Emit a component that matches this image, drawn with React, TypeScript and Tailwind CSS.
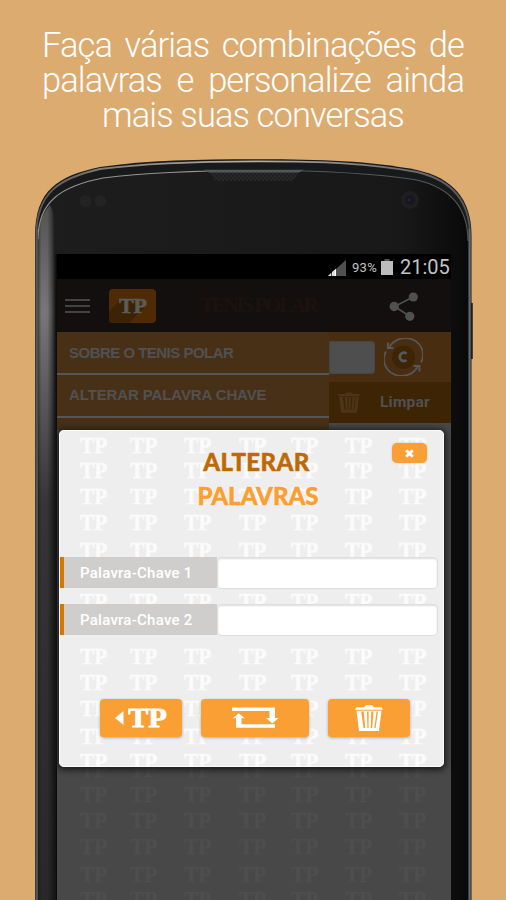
import React from "react";

const COLUMNS = [80, 130, 184, 239, 291, 345, 399];
const MODAL_ROWS = [438, 463, 489, 515, 543, 594, 649, 675, 701, 729, 754];
const SCREEN_ROWS = [762, 787, 813, 839, 867, 892];

const OUTLINE =
  "M35 760V77C35 31 58 17 100 8C150 1 200 .3 260 .3C320 .3 370 2 417 11C452 19 471.5 39 471.5 77V760Z";

// Repeating monogram wallpaper, positioned in page units.
function Wallpaper({ rows, x, y, width, height, color }: {
  rows: number[]; x: number; y: number; width: number; height: number; color: string;
}) {
  return (
    <svg className="absolute inset-0 h-full w-full" viewBox={`${x} ${y} ${width} ${height}`} aria-hidden="true">
      {rows.map((r) =>
        COLUMNS.map((c) => (
          <text key={`${r}-${c}`} x={c} y={r + 15} fill={color} stroke={color} strokeWidth=".5" fontFamily="Liberation Serif, serif" fontWeight="700" fontSize="23" textLength="27.5" lengthAdjust="spacingAndGlyphs">
            TP
          </text>
        )),
      )}
    </svg>
  );
}

function Monogram({ width, height, color }: { width: number; height: number; color: string }) {
  return (
    <svg width={width} height={height} viewBox="0 0 40 20">
      <text x="0" y="19.4" fill={color} stroke={color} strokeWidth=".8" fontFamily="Liberation Serif, serif" fontWeight="700" fontSize="28.5" textLength="40" lengthAdjust="spacingAndGlyphs">
        TP
      </text>
    </svg>
  );
}

function Trash({ className }: { className: string }) {
  return (
    <svg className={className} viewBox="0 0 28 26" fill="currentColor">
      <path d="M9.5 2.2Q9.7 .3 11.2 .3H16.8Q18.3 .3 18.5 2.2H26.5L28 4.8H0L1.5 2.2Z" />
      <path fillRule="evenodd" d="M1.5 5.8H26.5L24 26H4ZM6.2 6.5L8.5 23H10.2L8.8 6.5ZM12 6.5L12.4 23H13.6V6.5ZM16.3 6.5L15.8 23H17.2L18.5 6.5ZM21.6 6.5L19.3 23H20.6L23 6.5Z" />
    </svg>
  );
}

function PhoneBody() {
  return (
    <svg className="absolute inset-0" width="506" height="741" viewBox="0 0 506 741" aria-hidden="true">
      <defs>
        <linearGradient id="side" x1="0" x2="1">
          <stop offset="0" stopColor="#444" />
          <stop offset=".2" stopColor="#777" />
          <stop offset=".55" stopColor="#767676" />
          <stop offset=".8" stopColor="#4c4c4c" />
          <stop offset="1" stopColor="#1c1c1c" />
        </linearGradient>
        <linearGradient id="fade" x1="0" x2="0" y1="0" y2="1">
          <stop offset="0" stopColor="#111" stopOpacity=".35" />
          <stop offset=".15" stopColor="#111" stopOpacity="0" />
          <stop offset=".42" stopColor="#111" stopOpacity=".65" />
          <stop offset="1" stopColor="#111" stopOpacity=".78" />
        </linearGradient>
        <linearGradient id="glass" x1="0" x2="1">
          <stop offset="0" stopColor="#1d1d1d" />
          <stop offset=".85" stopColor="#181818" />
          <stop offset="1" stopColor="#090909" />
        </linearGradient>
        <linearGradient id="rim" x1="0" x2="1">
          <stop offset="0" stopColor="#555" />
          <stop offset=".2" stopColor="#8b8882" />
          <stop offset=".5" stopColor="#b9b0a4" />
          <stop offset=".8" stopColor="#777" />
          <stop offset="1" stopColor="#555" />
        </linearGradient>
        <pattern id="mesh" width="4" height="4" patternUnits="userSpaceOnUse">
          <rect width="4" height="4" fill="#292929" />
          <circle cx="1" cy="1" r=".8" fill="#111" />
          <circle cx="3" cy="3" r=".8" fill="#111" />
        </pattern>
      </defs>
      <path d="M471 144H472.8V200H471Z" fill="#222" />
      <path d={OUTLINE} fill="#17191a" />
      <path d="M36.3 760V77C36.3 33 60 19 100 10C150 3.5 200 2.3 260 2.3C320 2.3 370 4 417 13C451 21 470 41 470 77V760" fill="none" stroke="url(#rim)" strokeWidth="1.8" />
      <path d="M38 760V82C38 42 62 27 103 19C150 13 200 11.5 260 11.5C320 11.5 372 14 417 21C451 29 468 49 468 82V760Z" fill="url(#glass)" />
      <path d="M38 760V82C38 66 42 56 50 46Q54 52 55 70V760Z" fill="url(#side)" />
      <path d="M38 760V82C38 66 42 56 50 46Q54 52 55 70V760Z" fill="url(#fade)" />
      <path d="M55.5 95H57.5V760H55.5Z" fill="#0c0c0c" />
      <path d="M38 80C38 42 62 27 103 19C150 13 200 11.5 260 11.5" fill="none" stroke="#98938c" strokeWidth="1.1" />
      <path d="M260 11.5C320 11.5 372 14 417 21C451 29 468 49 468 82" fill="none" stroke="#55585a" strokeWidth="1.1" />
      <path d="M37.5 70V760" stroke="#4b5153" strokeWidth="1" />
      <path d="M469.3 70V760" stroke="#64666a" strokeWidth="1.5" />
      <path d="M205 11H303L298 13Q295 22 291 22H217Q214 22 211 15Z" fill="url(#mesh)" />
      <path d="M204 10.8H304L299 13.5H209Z" fill="#55585b" />
      <circle cx="85.5" cy="42" r="6" fill="#232323" />
      <circle cx="100.5" cy="42" r="6" fill="#232323" />
      <circle cx="410" cy="41" r="9" fill="#1f1f20" />
      <circle cx="410" cy="41" r="5" fill="#181820" />
      <circle cx="409" cy="41" r="1.3" fill="#222844" />
    </svg>
  );
}

function StatusBar() {
  return (
    <div className="flex h-[25px] items-center bg-black pl-[271px] font-['Roboto',sans-serif] text-[#c4c4c4]">
      <svg width="18" height="16" viewBox="0 0 18 16" className="mt-[2px] shrink-0">
        <path d="M18 0V16H0Z" fill="#505050" />
        <path d="M0 16L3 13V16ZM4 16V12L7 9.5V16Z" fill="#ddd" />
        <path d="M7 9.5V16H8V8.5Z" fill="#fff" />
      </svg>
      <span className="ml-[6px] w-[26px] pt-[1px] text-[13px] leading-none tracking-[0.3px]">93%</span>
      <svg width="12" height="16" viewBox="0 0 12 16" className="ml-[3px] shrink-0">
        <path d="M3.5 0H8.5V2H3.5Z" fill="#555" />
        <path d="M0 2H12V16H0Z" fill="#bcbcbc" />
      </svg>
      <span className="ml-[7px] pt-[1px] text-[20px] leading-none whitespace-nowrap">21:05</span>
    </div>
  );
}

function AppHeader() {
  return (
    <header className="flex h-[53px] items-center bg-[#130f0e] pl-2">
      <div className="flex w-[25px] flex-col gap-1">
        <i className="h-[2px] bg-[#434343]" />
        <i className="h-[2px] bg-[#434343]" />
        <i className="h-[2px] bg-[#434343]" />
      </div>
      <div className="relative ml-[19px] flex h-[34px] w-[47px] items-center justify-center overflow-hidden rounded-[4px] bg-[#4f2b05]">
        <svg className="absolute inset-0" width="47" height="34">
          <path d="M12 10L0 23V34H20L37 17Z" fill="#3d2305" />
        </svg>
        <div className="relative">
          <Monogram width={28} height={16} color="#5b5b5b" />
        </div>
      </div>
      <span className="ml-[44px] w-[117px] font-['Liberation_Serif',serif] text-[21px] leading-none font-bold tracking-[-2.3px] whitespace-nowrap text-[#1b120e]">TENIS POLAR</span>
      <svg className="ml-[72px]" width="30" height="30" viewBox="0 0 30 30" fill="#505050">
        <path d="M24 6L5.5 15.5L20.5 25" fill="none" stroke="#505050" strokeWidth="1.7" />
        <circle cx="5.2" cy="15.5" r="4.7" />
        <circle cx="24.3" cy="6" r="4.6" />
        <circle cx="20.8" cy="25.3" r="4.6" />
      </svg>
    </header>
  );
}

function Toolbar() {
  return (
    <div className="relative flex">
      <nav className="h-[98px] w-[272px] bg-[#483016] font-['Liberation_Sans',sans-serif] text-[15px] font-bold whitespace-nowrap text-[#505152]">
        <div className="flex h-[43px] items-center border-b-2 border-[#565656] pt-[1px] pl-3 tracking-[-0.52px]">SOBRE O TENIS POLAR</div>
        <div className="flex h-[43px] items-center border-b-2 border-[#565656] pl-3 tracking-[-0.12px]">ALTERAR PALAVRA CHAVE</div>
      </nav>
      <div className="h-[91px] w-[122px] bg-[#3c2405]">
        <div className="flex h-[50px] items-center bg-[#482d10]">
          <div className="h-[33px] w-[46px] rounded-r-[4px] bg-[#4e4e4e] shadow-[inset_0_0_2px_#363636]" />
          <svg className="ml-[9px]" width="39" height="38" viewBox="0 0 39 38" fill="none" stroke="#555759">
            <circle cx="19.5" cy="19.3" r="11.5" fill="#3c2405" stroke="none" />
            <path d="M5.5 9A17.3 16.2 0 0 1 37 24.5M33.5 29A17.3 16.2 0 0 1 2 13.5" strokeWidth="1.8" />
            <path d="M4 4.5V10H9.5M29.5 28H35.5V33.5" strokeWidth="2" />
            <path d="M22.5 15.8A4 4.2 0 1 0 22.5 22" strokeWidth="2.8" />
          </svg>
        </div>
        <div className="flex h-[41px] items-center pl-[9px] text-[#50504f]">
          <Trash className="h-[23px] w-[22px] text-[#4d3519]" />
          <span className="ml-[20px] font-['Roboto',sans-serif] text-[15.5px] font-bold tracking-[0.2px]">Limpar</span>
        </div>
      </div>
    </div>
  );
}

function KeywordField({ label }: { label: string }) {
  return (
    <label className="flex h-[32px]">
      <span className="flex h-[31px] w-[157px] items-center border-l-4 border-[#d47800] bg-[#cfcecc] pt-[2px] pl-4 font-['Roboto',sans-serif] text-[15px] font-medium tracking-[0.25px] text-white">
        {label}
      </span>
      <input className="h-[32px] w-[221px] rounded-[4px] border border-[#dedede] bg-white shadow-[inset_0_1px_2px_#ddd] outline-none" />
    </label>
  );
}

const BUTTON = "flex h-[38px] items-center justify-center rounded-[4px] bg-[#fa9f34] text-white shadow-[0_1px_3px_#aaa]";

function WordsDialog() {
  return (
    <section className="absolute top-[176px] left-[2px] h-[337px] w-[385px] rounded-[5px] bg-[#eee] shadow-[0_1px_6px_2px_#191919]">
      <Wallpaper rows={MODAL_ROWS} x={59} y={430} width={385} height={337} color="#fbfbfb" />
      <div className="pointer-events-none absolute inset-0 rounded-[5px] border border-[#fcfcfc]" />
      <button className="absolute top-[13px] right-[17px] flex h-[20px] w-[35px] items-center justify-center rounded-[5px] bg-[#fa9f34] shadow-[0_0_2px_#bbb]">
        <svg width="9" height="9" viewBox="0 0 9 9"><path d="M1.2 1.2L7.8 7.8M7.8 1.2L1.2 7.8" stroke="#fff" strokeWidth="2.8" /></svg>
      </button>
      <div className="relative flex flex-col pt-[15px]">
        <h2 className="flex flex-col items-center pl-[13px] font-['Lato',sans-serif] text-[24px] leading-[34px] font-black [text-shadow:0_0_2px_#fff,0_0_2px_#fff]">
          <span className="mr-[3px] tracking-[0.4px] text-[#bd6a06] [-webkit-text-stroke:0.5px_#bd6a06]">ALTERAR</span>
          <span className="text-[#fb9f32] [-webkit-text-stroke:0.5px_#fb9f32]">PALAVRAS</span>
        </h2>
        <div className="mt-[44px] flex flex-col gap-[15px] pl-[1px]">
          <KeywordField label="Palavra-Chave 1" />
          <KeywordField label="Palavra-Chave 2" />
        </div>
        <div className="mt-[63px] flex gap-[19px] pl-[41px]">
          <button className={BUTTON + " w-[82px] gap-[4px]"}>
            <svg width="9" height="14" viewBox="0 0 9 14"><path d="M0 7L8.5 0V14Z" fill="#fff" /></svg>
            <Monogram width={39} height={20} color="#fff" />
          </button>
          <button className={BUTTON + " w-[108px]"}>
            <svg width="47" height="22" viewBox="0 0 47 22" fill="#fff">
              <path d="M0 .5H43V11H46.5L40.3 16.5L34 11H37.5V4H0Z" />
              <path d="M6.7 6.2L12.7 11.3H9.5V17.3H43V20.8H4V11.3H.7Z" />
            </svg>
          </button>
          <button className={BUTTON + " w-[82px]"}>
            <Trash className="h-[26px] w-[28px]" />
          </button>
        </div>
      </div>
    </section>
  );
}

export default function App() {
  return (
    <main className="h-[900px] w-[506px] overflow-hidden bg-[#dcab70]">
      <h1 className="h-[159px] px-[42px] pt-[28px] font-['Roboto',sans-serif] text-[34.5px] leading-[35px] font-light tracking-[-0.9px] text-white">
        <span className="flex justify-between"><span>Faça</span> <span>várias</span> <span>combinações</span> <span>de</span></span>
        <span className="flex justify-between"><span>palavras</span> <span>e</span> <span>personalize</span> <span>ainda</span></span>
        <span className="block text-center">mais suas conversas</span>
      </h1>
      <div className="relative h-[741px] pt-[95px] pl-[57px]">
        <PhoneBody />
        <div className="relative h-[646px] w-[394px] bg-[#484848]">
          <Wallpaper rows={SCREEN_ROWS} x={57} y={254} width={394} height={646} color="#4e4e4e" />
          <div className="relative">
            <StatusBar />
            <AppHeader />
            <Toolbar />
          </div>
          <WordsDialog />
        </div>
      </div>
    </main>
  );
}
